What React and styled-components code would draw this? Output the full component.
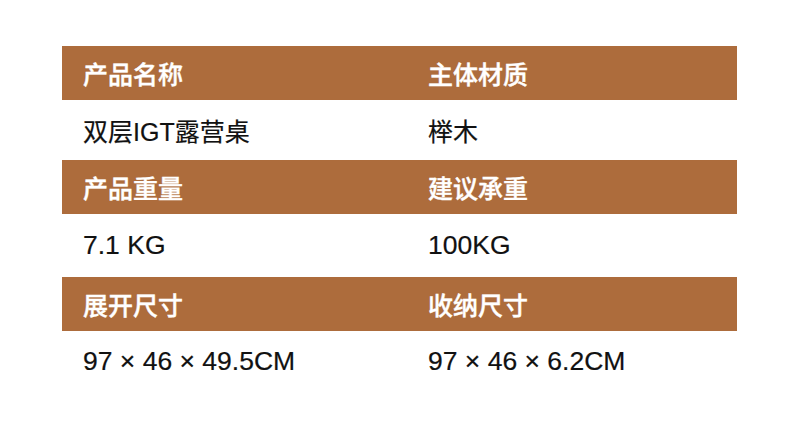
import React from "react";
import styled, { createGlobalStyle } from "styled-components";

const GlobalStyle = createGlobalStyle`
  html, body {
    margin: 0;
    padding: 0;
    background: #fff;
  }
  body {
    font-family: "Liberation Sans", "Noto Sans CJK SC", sans-serif;
  }
`;

const Page = styled.div`
  width: 800px;
  height: 423px;
  padding: 46px 63px 0 62px;
  box-sizing: border-box;
`;

const Table = styled.div`
  display: flex;
  flex-direction: column;
`;

const HeadRow = styled.div`
  display: grid;
  grid-template-columns: 345px 1fr;
  align-items: center;
  height: 54px;
  background: #ad6c3c;
  color: #fff;
`;

const ValueRow = styled.div`
  display: grid;
  grid-template-columns: 345px 1fr;
  align-items: center;
  height: ${(p) => p.$h}px;
  color: #111;
`;

const HeadCell = styled.div`
  padding-left: 21px;
  font-size: 25px;
  font-weight: 500;
  -webkit-text-stroke: 0.4px #fff;
  white-space: nowrap;
`;

const ValueCell = styled.div`
  padding-left: 21px;
  font-size: ${(p) => p.$size}px;
  -webkit-text-stroke: 0.2px #111;
  white-space: nowrap;
`;

const rows = [
  { head: ["产品名称", "主体材质"], value: ["双层IGT露营桌", "榉木"], h: 60, size: 25 },
  { head: ["产品重量", "建议承重"], value: ["7.1 KG", "100KG"], h: 63, size: 26.5 },
  { head: ["展开尺寸", "收纳尺寸"], value: ["97 × 46 × 49.5CM", "97 × 46 × 6.2CM"], h: 60, size: 26.5 },
];

const App = () => {
  return (
    <Page>
      <GlobalStyle />
      <Table>
        {rows.map((r, i) => (
          <React.Fragment key={i}>
            <HeadRow>
              <HeadCell>{r.head[0]}</HeadCell>
              <HeadCell>{r.head[1]}</HeadCell>
            </HeadRow>
            <ValueRow $h={r.h}>
              <ValueCell $size={r.size}>{r.value[0]}</ValueCell>
              <ValueCell $size={r.size}>{r.value[1]}</ValueCell>
            </ValueRow>
          </React.Fragment>
        ))}
      </Table>
    </Page>
  );
};

export default App;
